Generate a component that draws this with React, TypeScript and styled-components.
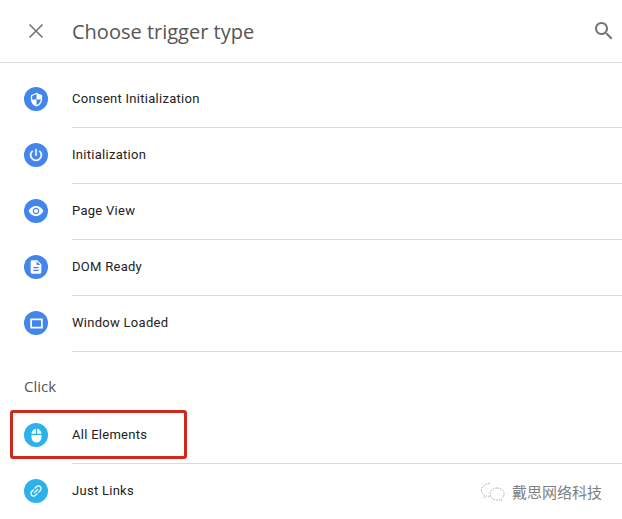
import React from "react";
import styled, { createGlobalStyle } from "styled-components";

const GlobalStyle = createGlobalStyle`
  html, body {
    margin: 0;
    padding: 0;
    background: #fff;
    overflow: hidden;
  }
`;

const ShieldIcon = () => (
  <svg width="15" height="15" viewBox="0 0 24 24" fill="#fff">
    <path d="M12 1 3 5v6c0 5.550 3.840 10.740 9 12 5.160-1.260 9-6.450 9-12V5l-9-4zm0 10.990h7c-.530 4.120-3.280 7.790-7 8.940V12H5V6.300l7-3.110v8.800z" />
  </svg>
);

const PowerIcon = () => (
  <svg width="16" height="16" viewBox="0 0 24 24" fill="#fff" stroke="#fff" strokeWidth="0.600">
    <path d="M13 3h-2v10h2V3zm4.830 2.170-1.420 1.420C17.990 7.860 19 9.810 19 12c0 3.870-3.130 7-7 7s-7-3.130-7-7c0-2.190 1.010-4.140 2.580-5.420L6.170 5.170C4.230 6.820 3 9.260 3 12c0 4.970 4.030 9 9 9s9-4.030 9-9c0-2.740-1.230-5.180-3.170-6.830z" />
  </svg>
);

const EyeIcon = () => (
  <svg width="16" height="16" viewBox="0 0 24 24" fill="#fff">
    <path d="M12 4.500C7 4.500 2.730 7.610 1 12c1.730 4.390 6 7.500 11 7.500s9.270-3.110 11-7.500c-1.730-4.390-6-7.500-11-7.500zM12 17c-2.760 0-5-2.240-5-5s2.240-5 5-5 5 2.240 5 5-2.240 5-5 5zm0-8c-1.660 0-3 1.340-3 3s1.340 3 3 3 3-1.340 3-3-1.340-3-3-3z" />
  </svg>
);

const FileIcon = () => (
  <svg width="16" height="16" viewBox="0 0 24 24" fill="#fff">
    <path d="M14 2H6c-1.100 0-2 .9-2 2v16c0 1.100.9 2 2 2h12c1.100 0 2-.9 2-2V8l-6-6zm2 16H8v-2h8v2zm0-4H8v-2h8v2zm-3-5V3.500L18.500 9H13z" />
  </svg>
);

const WindowIcon = () => (
  <svg width="15" height="15" viewBox="0 0 24 24" fill="none" stroke="#fff" strokeWidth="2.800">
    <path d="M3.400 5.400h17.200v13.200H3.400z" />
  </svg>
);

const MouseIcon = () => (
  <svg width="15" height="15" viewBox="0 0 24 24" fill="#fff">
    <path d="M13 1.070V9h7c0-4.080-3.050-7.440-7-7.930zM4 15c0 4.420 3.580 8 8 8s8-3.580 8-8v-4H4v4zm7-13.930C7.050 1.560 4 4.920 4 9h7V1.070z" />
  </svg>
);

const LinkIcon = () => (
  <svg width="16" height="16" viewBox="0 0 24 24" fill="#fff">
    <path
      transform="rotate(-45 12 12)"
      d="M3.900 12c0-1.710 1.390-3.100 3.100-3.100h4V7H7c-2.760 0-5 2.240-5 5s2.240 5 5 5h4v-1.900H7c-1.710 0-3.100-1.390-3.100-3.100zM8 13h8v-2H8v2zm9-6h-4v1.900h4c1.710 0 3.100 1.390 3.100 3.100s-1.390 3.100-3.100 3.100h-4V17h4c2.760 0 5-2.240 5-5s-2.240-5-5-5z"
    />
  </svg>
);

const triggers = [
  { label: "Consent Initialization", icon: <ShieldIcon /> },
  { label: "Initialization", icon: <PowerIcon /> },
  { label: "Page View", icon: <EyeIcon /> },
  { label: "DOM Ready", icon: <FileIcon /> },
  { label: "Window Loaded", icon: <WindowIcon /> },
];

const App = () => {
  return (
    <Page>
      <GlobalStyle />
      <Header>
        <CloseButton>
          <svg width="24" height="24" viewBox="0 0 24 24" fill="none" stroke="#757575" strokeWidth="1.600">
            <path d="M5.500 5.500l13 13M18.500 5.500l-13 13" />
          </svg>
        </CloseButton>
        <Title>Choose trigger type</Title>
        <SearchButton>
          <svg width="24" height="24" viewBox="0 0 24 24" fill="#757575">
            <path d="M15.500 14h-.79l-.28-.27C15.410 12.590 16 11.110 16 9.500 16 5.910 13.090 3 9.500 3S3 5.910 3 9.500 5.910 16 9.500 16c1.610 0 3.090-.59 4.230-1.570l.27.28v.79l5 4.990L20.490 19l-4.990-5zm-6 0C7.010 14 5 11.990 5 9.500S7.010 5 9.500 5 14 7.010 14 9.500 11.990 14 9.500 14z" />
          </svg>
        </SearchButton>
      </Header>

      <List>
        {triggers.map((t) => (
          <Row key={t.label}>
            <Badge>{t.icon}</Badge>
            <Label>{t.label}</Label>
          </Row>
        ))}
      </List>

      <SectionTitle>Click</SectionTitle>

      <Row>
        <Badge $click>
          <MouseIcon />
        </Badge>
        <Label>All Elements</Label>
        <Highlight />
      </Row>
      <Row>
        <Badge $click>
          <LinkIcon />
        </Badge>
        <Label>Just Links</Label>
      </Row>

      <Watermark>
        <svg width="26" height="20" viewBox="0 0 26 20" fill="none" stroke="#a8a8a8" strokeWidth="0.900" strokeDasharray="1.600 1.200">
          <path d="M10 1.500C5 1.500 1.500 4.500 1.500 8c0 2.200 1.300 3.800 3 5l-.7 2.400 2.800-1.400c1 .3 2 .5 3 .4" />
          <path d="M17 6c-4 0-7 2.600-7 6s3 6 7 6c1 0 1.800-.2 2.600-.4l2.200 1.200-.6-2c1.800-1.200 3-2.900 3-4.800 0-3.400-3.200-6-7.200-6z" />
        </svg>
        <WatermarkText>戴思网络科技</WatermarkText>
      </Watermark>
    </Page>
  );
};

export default App;

const Page = styled.div`
  position: relative;
  width: 622px;
  height: 519px;
  overflow: hidden;
  background: #fff;
  font-family: Roboto, "Liberation Sans", sans-serif;
`;

const Header = styled.header`
  display: flex;
  align-items: center;
  height: 62px;
  border-bottom: 1px solid #dcdcdc;
`;

const CloseButton = styled.div`
  display: flex;
  justify-content: center;
  width: 72px;
`;

const Title = styled.h1`
  flex: 1;
  margin: 0;
  font-family: "Open Sans", Roboto, sans-serif;
  font-size: 20px;
  font-weight: 400;
  color: #555;
`;

const SearchButton = styled.div`
  display: flex;
  margin-right: 6px;
`;

const List = styled.div`
  padding-top: 9px;
`;

const Row = styled.div`
  position: relative;
  display: flex;
  align-items: center;
  height: 56px;
`;

const Badge = styled.div<{ $click?: boolean }>`
  display: flex;
  flex: none;
  align-items: center;
  justify-content: center;
  width: 24px;
  height: 24px;
  margin: 0 24px 2px;
  border-radius: 50%;
  background: ${(p) => (p.$click ? "#2db1ea" : "#4285ed")};
`;

const Label = styled.div`
  flex: 1;
  align-self: stretch;
  display: flex;
  align-items: center;
  box-sizing: border-box;
  padding-bottom: 3px;
  border-bottom: 1px solid #dcdcdc;
  font-size: 13px;
  font-weight: 400;
  letter-spacing: 0.28px;
  color: #222;
`;

const SectionTitle = styled.div`
  height: 31px;
  padding: 25px 0 0 24px;
  line-height: 18px;
  font-family: "Open Sans", Roboto, sans-serif;
  font-size: 15px;
  color: #555;
`;

const Highlight = styled.div`
  position: absolute;
  left: 10px;
  top: 2px;
  width: 177px;
  height: 49px;
  box-sizing: border-box;
  border: 3px solid #d0281c;
  border-radius: 3px;
`;

const Watermark = styled.div`
  position: absolute;
  left: 480px;
  top: 481px;
  display: flex;
  align-items: center;
  gap: 6px;
`;

const WatermarkText = styled.span`
  font-family: "Noto Sans CJK SC", sans-serif;
  font-size: 15px;
  color: #808080;
`;
